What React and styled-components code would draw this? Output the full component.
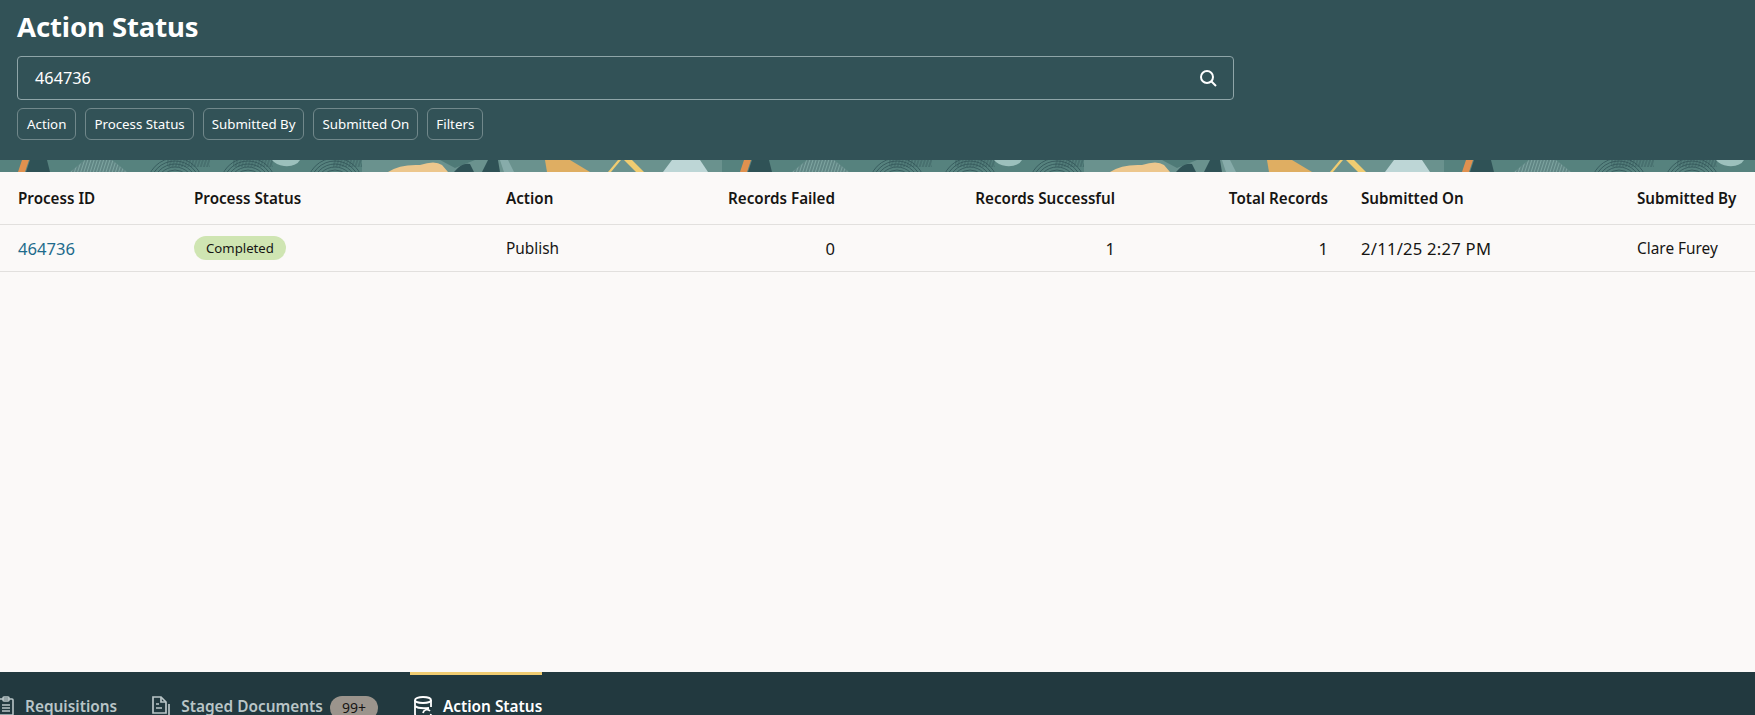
import React from 'react';
import styled, { createGlobalStyle } from 'styled-components';

const Global = createGlobalStyle`
  html, body { margin: 0; height: 715px; overflow: hidden; }
  body { font-family: "Noto Sans", "Open Sans", sans-serif; background: #fbf9f8; color: #161513; }
  #root { height: 100%; }
`;
const Page = styled.div`display:flex;flex-direction:column;height:715px;overflow:hidden;`;
const Header = styled.header`height:160px;box-sizing:border-box;background:#325257;padding:10px 17px 0;color:#fff;`;
const Title = styled.h1`margin:0;font-size:27.5px;line-height:34px;font-weight:700;letter-spacing:-.1px;`;
const SearchBox = styled.div`
  width:1217px;height:44px;box-sizing:border-box;margin-top:12px;padding:0 16px 0 17px;
  display:flex;align-items:center;justify-content:space-between;
  border:1px solid #8fa5a8;border-radius:4px;font-size:16.3px;
`;
const Chips = styled.div`display:flex;gap:9px;margin-top:8px;`;
const Chip = styled.button`
  height:32px;box-sizing:border-box;padding:0 ${p => p.$pad || 8}px;background:transparent;color:#fff;
  border:1px solid #71888b;border-radius:6px;font:13.3px "Noto Sans",sans-serif;
`;
const Band = styled.svg`display:block;width:100%;height:12px;flex:none;`;
const Main = styled.main`flex:1;`;
const Row = styled.div`
  display:grid;grid-template-columns:176px 312px 100px 229px 280px 213px 309px 1fr;
  padding-left:18px;align-items:center;height:${p => p.$h}px;box-sizing:border-box;
  border-bottom:1px solid #e2e0de;font-size:${p => p.$head ? 15.2 : 15.4}px;font-weight:${p => p.$head ? 600 : 400};
`;
const Cell = styled.div`text-align:${p => p.$right ? 'right' : 'left'};padding-left:${p => p.$pad || 0}px;white-space:nowrap;`;
const Num = styled(Cell)`font-size:16.6px;letter-spacing:${p => p.$wide ? '.25px' : '0'};`;
const Link = styled.a`color:#1e6b8c;font-size:16.6px;`;
const Badge = styled.span`
  display:inline-block;height:24px;line-height:24px;padding:0 12px;border-radius:12px;
  background:#cfe5b2;font-size:13.2px;
`;
const Footer = styled.footer`
  height:43px;flex:none;background:#22393f;display:flex;overflow:hidden;margin-left:-3px;
`;
const Tab = styled.div`
  display:flex;align-items:flex-start;gap:10px;padding-top:24px;margin-right:${p => p.$mr || 0}px;
  font-size:15.4px;line-height:22px;font-weight:600;color:${p => p.$on ? '#fff' : '#b9c5c7'};position:relative;
  ${p => p.$on && `&::before{content:"";position:absolute;left:-3px;right:0;top:0;height:3px;background:#f0cc71;}`}
`;
const Count = styled.span`
  background:#9b948c;color:#161513;border-radius:12px;height:24px;line-height:24px;width:48px;text-align:center;
  font-size:14px;font-weight:400;margin-left:-3px;
`;

const Rings = ({ cx, hx, hw }) => (
  <g>
    {[13, 16, 19, 22, 25].map(r => (
      <circle key={r} cx={cx} cy={26} r={r + 3} fill="none" stroke="#2f5356" strokeWidth="1" opacity=".8" />
    ))}
    <rect x={hx} y="0" width={hw} height="7" fill="url(#lines)" />
  </g>
);

function Pattern() {
  return (
    <Band aria-hidden="true">
      <defs>
        <pattern id="lines" width="3" height="4" patternUnits="userSpaceOnUse" patternTransform="rotate(18)">
          <line x1="1" y1="0" x2="1" y2="4" stroke="#2f5356" strokeWidth="1" opacity=".8" />
        </pattern>
        <pattern id="tile" width="722" height="12" patternUnits="userSpaceOnUse">
          <rect width="722" height="12" fill="#56827e" />
          <path d="M18 12 L22 0 H29 L25 12Z" fill="#e0914f" />
          <path d="M26 12 L30 0 H47 L50 12Z" fill="#2f5256" />
          <path d="M70 12 L85 0 H112 L127 12Z" fill="#7ea5a1" />
          <path d="M70 12 L85 0 H112 L127 12Z" fill="url(#lines)" />
          <Rings cx={175} hx={167} hw={43} />
          <Rings cx={248} hx={233} hw={40} />
          <path d="M272 0 H300 Q296 7 284 6Q276 5 272 0Z" fill="#9cc0bc" />
          <Rings cx={335} hx={333} hw={29} />
          <path d="M362 0 H722 V12 H362Z" fill="#6a928e" />
          <path d="M388 12 Q400 4 420 5 Q435 0 442 5 L448 12Z" fill="#edc78d" />
          <path d="M440 0 H475 L455 8Z" fill="#4f7a77" />
          <path d="M454 12 Q462 2 470 4 L474 12Z" fill="#2f5256" />
          <path d="M482 12 L488 0 H498 L500 12Z" fill="#2f5256" />
          <path d="M500 0 H508 L514 12 H504Z" fill="#87acaa" />
          <path d="M545 0 H570 L590 12 H547Z" fill="#dfae62" />
          <path d="M608 12 L618 0 H621 L611 12Z" fill="#f0cc71" />
          <path d="M624 0 H632 L644 12 H636Z" fill="#f0cc71" />
          <path d="M663 12 L672 0 H700 L708 12Z" fill="#bdd6d6" />
        </pattern>
      </defs>
      <rect width="100%" height="12" fill="url(#tile)" />
    </Band>
  );
}

const ClipboardIcon = () => (
  <svg width="18" height="20" viewBox="0 0 18 20" fill="none" stroke="currentColor" strokeWidth="1.6">
    <rect x="2" y="3" width="14" height="16" rx="1" /><rect x="6" y="1" width="6" height="4" rx="1" />
    <path d="M5 9h8M5 12h8M5 15h8" />
  </svg>
);
const DocIcon = () => (
  <svg width="20" height="22" viewBox="0 0 20 22" fill="none" stroke="currentColor" strokeWidth="1.7">
    <path d="M2 1h8l5 5v11H2z" /><path d="M10 1v5h5" /><path d="M5 8h3M5 12h6" /><path d="M18 8v13H6" />
  </svg>
);
const DbIcon = () => (
  <svg width="20" height="22" viewBox="0 0 20 22" fill="none" stroke="currentColor" strokeWidth="1.8">
    <ellipse cx="10" cy="4" rx="8" ry="3" /><path d="M2 4v14q0 3 5 3M18 4v7M2 10q3 3 14 2" />
    <path d="M10 17a4 4 0 0 1 7-2M18 18a4 4 0 0 1-7 2" />
  </svg>
);
const SearchIcon = () => (
  <svg width="18" height="18" viewBox="0 0 18 18" fill="none" stroke="#fff" strokeWidth="2">
    <circle cx="8" cy="8" r="6" /><path d="M12.5 12.5 17 17" />
  </svg>
);

export default function App() {
  return (
    <Page>
      <Global />
      <Header>
        <Title>Action Status</Title>
        <SearchBox>464736<SearchIcon /></SearchBox>
        <Chips>
          <Chip $pad={9}>Action</Chip>
          <Chip>Process Status</Chip>
          <Chip>Submitted By</Chip>
          <Chip>Submitted On</Chip>
          <Chip>Filters</Chip>
        </Chips>
      </Header>
      <Pattern />
      <Main>
        <Row $h={53} $head>
          <Cell>Process ID</Cell><Cell>Process Status</Cell><Cell>Action</Cell>
          <Cell $right>Records Failed</Cell><Cell $right>Records Successful</Cell><Cell $right>Total Records</Cell>
          <Cell $pad={33}>Submitted On</Cell><Cell>Submitted By</Cell>
        </Row>
        <Row $h={47}>
          <Cell><Link>464736</Link></Cell><Cell><Badge>Completed</Badge></Cell><Cell>Publish</Cell>
          <Num $right>0</Num><Num $right>1</Num><Num $right>1</Num>
          <Num $pad={33} $wide>2/11/25 2:27 PM</Num><Cell>Clare Furey</Cell>
        </Row>
      </Main>
      <Footer>
        <Tab $mr={34}><ClipboardIcon />Requisitions</Tab>
        <Tab $mr={35}><DocIcon />Staged Documents<Count>99+</Count></Tab>
        <Tab $on><DbIcon />Action Status</Tab>
      </Footer>
    </Page>
  );
}
